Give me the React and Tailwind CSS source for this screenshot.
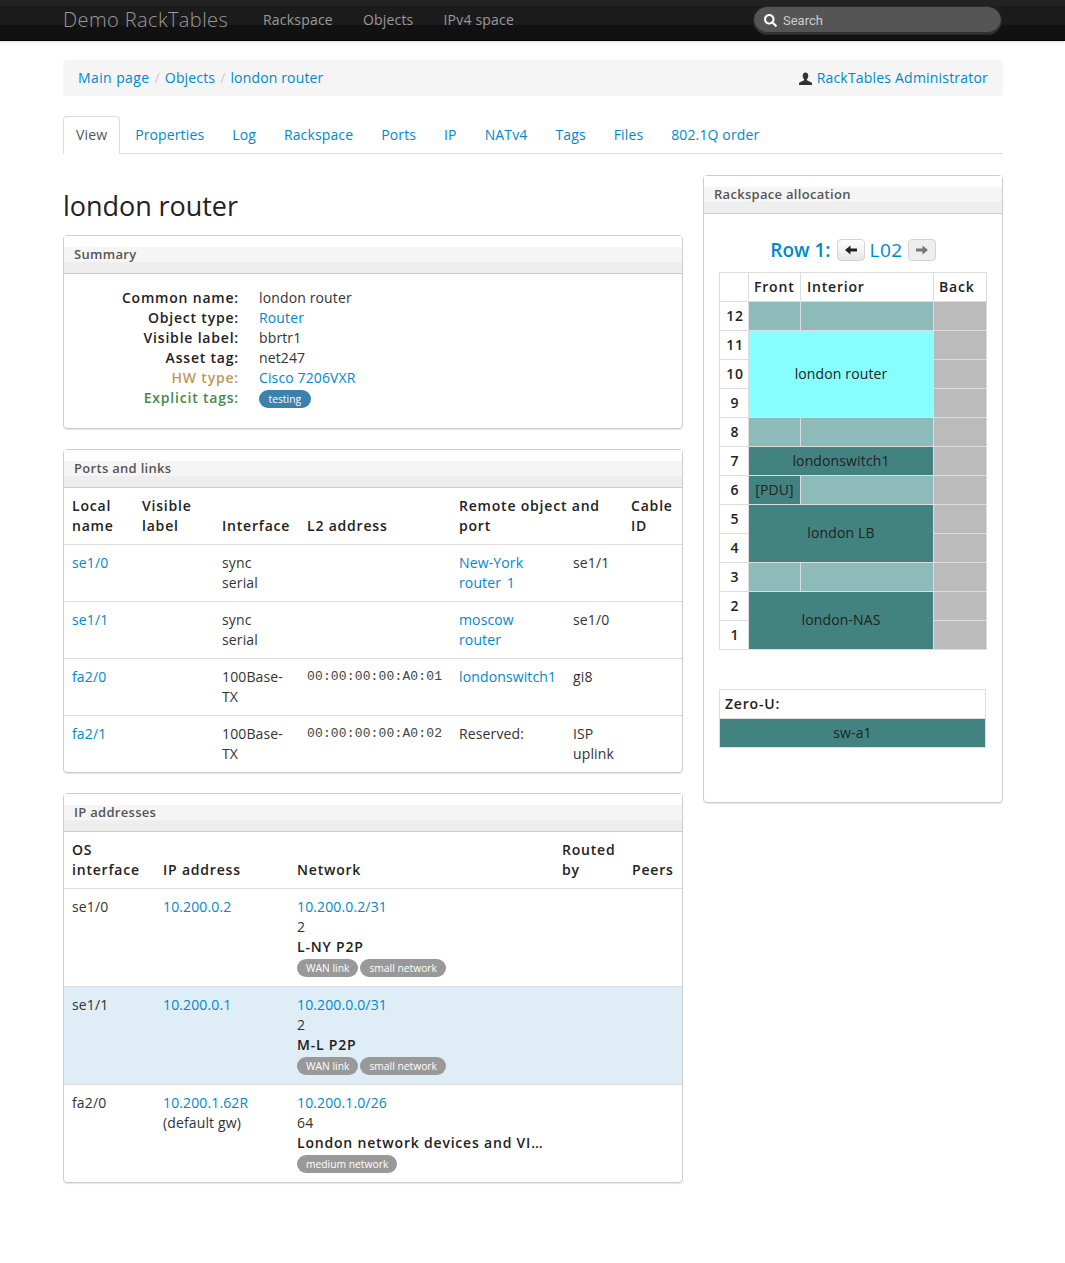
import { FaSearch } from "react-icons/fa";

const LINK = "text-[#0088cc]";
const BOLD = "font-semibold tracking-[0.8px]";

function Label({ children, blue }) {
  return (
    <span className={`inline-block h-[18px] rounded-full text-[10.3px] leading-[18px] tracking-normal text-white font-normal ${blue ? "bg-[#3a81ad] px-[9.5px]" : "bg-[#999999] px-[9px]"}`}>
      {children}
    </span>
  );
}

function Panel({ title, children, className = "" }) {
  return (
    <section className={`rounded border border-[#cccccc] shadow-[0_1px_1px_rgba(0,0,0,0.1)] ${className}`}>
      <h3 className="flex h-[38px] items-center border-b border-[#cccccc] bg-[linear-gradient(#ffffff_11px,#f5f5f5_11px,#f5f5f5_26px,#eeeeee_26px)] px-[10px] pb-[2px] text-[13px] font-semibold tracking-[0.3px] text-[#555555]">
        {title}
      </h3>
      {children}
    </section>
  );
}

const summary = [
  ["Common name:", "london router", "text-[#222222]"],
  ["Object type:", <a className={LINK}>Router</a>, "text-[#222222]"],
  ["Visible label:", "bbrtr1", "text-[#222222]"],
  ["Asset tag:", "net247", "text-[#222222]"],
  ["HW type:", <a className={LINK}>Cisco 7206VXR</a>, "text-[#c09853]"],
  ["Explicit tags:", <Label blue>testing</Label>, "text-[#468847]"],
];

const ports = [
  ["se1/0", "sync serial", "", <a className={LINK}>New-York router 1</a>, "se1/1"],
  ["se1/1", "sync serial", "", <a className={LINK}>moscow router</a>, "se1/0"],
  ["fa2/0", "100Base-TX", "00:00:00:00:A0:01", <a className={LINK}>londonswitch1</a>, "gi8"],
  ["fa2/1", "100Base-TX", "00:00:00:00:A0:02", "Reserved:", "ISP uplink"],
];

const ips = [
  { os: "se1/0", ip: "10.200.0.2", net: "10.200.0.2/31", n: "2", name: "L-NY P2P", tags: ["WAN link", "small network"] },
  { os: "se1/1", ip: "10.200.0.1", net: "10.200.0.0/31", n: "2", name: "M-L P2P", tags: ["WAN link", "small network"], hl: true },
  { os: "fa2/0", ip: "10.200.1.62R", gw: true, net: "10.200.1.0/26", n: "64", name: "London network devices and VI…", tags: ["medium network"] },
];

const th = `border-t border-[#dddddd] p-2 text-left align-bottom text-[#222222] ${BOLD}`;
const td = "border-t border-[#dddddd] p-2 align-top";

function Arrow({ right, dim }) {
  return (
    <span className={`flex h-[22px] w-7 shrink-0 items-center justify-center rounded border border-[#d5d5d5] ${dim ? "bg-[#eeeeee]" : "bg-[linear-gradient(#ffffff,#e6e6e6)]"}`}>
      <svg width="14" height="12" viewBox="0 0 14 12" className={right ? "rotate-180" : ""}>
        <path d="M1 6 L6.5 1.5 L6.5 4.5 L13 4.5 L13 7.5 L6.5 7.5 L6.5 10.5 Z" fill={dim ? "#777777" : "#222222"} />
      </svg>
    </span>
  );
}

const FREE = "bg-[#8cbbb9]";
const USED = "bg-[#428280]";
const rc = "border border-[#dddddd] p-0 text-center";

function Back() {
  return <td className={`${rc} bg-[#bbbbbb]`} />;
}

function Unit({ n }) {
  return <th className={`${rc} pl-[2px] text-[#222222] ${BOLD}`}>{n}</th>;
}

function FreeCells() {
  return (
    <>
      <td className={`${rc} ${FREE}`} />
      <td className={`${rc} ${FREE}`} />
    </>
  );
}

function Rack() {
  return (
    <table className="w-[267px] table-fixed border-collapse text-[#222222] [&_tr]:h-[29px]">
      <colgroup>
        <col className="w-[29px]" />
        <col className="w-[52px]" />
        <col className="w-[133px]" />
        <col className="w-[53px]" />
      </colgroup>
      <tbody>
        <tr>
          <td className={rc} />
          <th className={`border border-[#dddddd] pl-[5px] text-left ${BOLD}`}>Front</th>
          <th className={`border border-[#dddddd] pl-[6px] text-left ${BOLD}`}>Interior</th>
          <th className={`border border-[#dddddd] pl-[5px] text-left ${BOLD}`}>Back</th>
        </tr>
        <tr><Unit n="12" /><FreeCells /><Back /></tr>
        <tr><Unit n="11" /><td rowSpan={3} colSpan={2} className={`${rc} bg-[#88ffff]`}>london router</td><Back /></tr>
        <tr><Unit n="10" /><Back /></tr>
        <tr><Unit n="9" /><Back /></tr>
        <tr><Unit n="8" /><FreeCells /><Back /></tr>
        <tr><Unit n="7" /><td colSpan={2} className={`${rc} ${USED}`}>londonswitch1</td><Back /></tr>
        <tr><Unit n="6" /><td className={`${rc} ${USED}`}>[PDU]</td><td className={`${rc} ${FREE}`} /><Back /></tr>
        <tr><Unit n="5" /><td rowSpan={2} colSpan={2} className={`${rc} ${USED} pb-[2px]`}>london LB</td><Back /></tr>
        <tr><Unit n="4" /><Back /></tr>
        <tr><Unit n="3" /><FreeCells /><Back /></tr>
        <tr><Unit n="2" /><td rowSpan={2} colSpan={2} className={`${rc} ${USED} pb-[2px]`}>london-NAS</td><Back /></tr>
        <tr><Unit n="1" /><Back /></tr>
      </tbody>
    </table>
  );
}

export default function App() {
  return (
    <div className="min-h-[1263px] bg-white font-['Open_Sans',sans-serif] text-[14px] leading-5 tracking-[0.13px] text-[#333333]">
      <header className="h-[41px] bg-[linear-gradient(#222222_6px,#1b1b1b_6px,#1b1b1b_25px,#111111_25px,#111111_40px,#000000_40px)] shadow-[0_1px_3px_rgba(0,0,0,0.15)]">
        <div className="ml-[63px] flex h-10 w-[940px] items-center">
          <span className="w-[200px] text-[20px] font-light tracking-[0.4px] text-[#999999]">Demo RackTables</span>
          <nav className="flex gap-[30px] tracking-[0.2px] text-[#999999]">
            <span>Rackspace</span>
            <span>Objects</span>
            <span>IPv4 space</span>
          </nav>
          <div className="ml-auto mr-px flex h-[29px] w-[249px] items-center gap-[6px] rounded-full border border-[#2a2a2a] bg-[#555555] pl-[10px] font-['Roboto',sans-serif] text-[13px] tracking-normal text-[#cccccc] shadow-[inset_0_-2px_0_#333333]">
            <FaSearch className="h-[13px] w-[13px] text-white" />
            <span className="pt-px">Search</span>
          </div>
        </div>
      </header>

      <main className="ml-[63px] w-[940px]">
        <div className="mt-[19px] flex h-9 items-center justify-between rounded bg-[#f5f5f5] px-[15px] tracking-[0.15px]">
          <div className={LINK}>
            <span className="tracking-[0.4px]">Main page</span><span className="px-[5px] text-[#cccccc]">/</span>Objects<span className="px-[5px] text-[#cccccc]">/</span>london router
          </div>
          <div className="flex items-center gap-[5px]">
            <svg width="13" height="13" viewBox="0 0 13 13" className="shrink-0">
              <path d="M6.5 0.5C8.3 0.5 9.3 1.9 9.3 3.8C9.3 5.4 8.6 6.6 7.9 7.3L7.9 8.2L12 10.2C12.7 10.6 13 11 13 11.6L13 13L0 13L0 11.6C0 11 0.3 10.6 1 10.2L5.1 8.2L5.1 7.3C4.4 6.6 3.7 5.4 3.7 3.8C3.7 1.9 4.7 0.5 6.5 0.5Z" fill="#333333" />
            </svg>
            <span className={`${LINK} tracking-[0.2px]`}>RackTables Administrator</span>
          </div>
        </div>

        <ul className={`mt-5 flex h-[38px] gap-[2px] border-b border-[#dddddd] ${LINK}`}>
          <li className="h-[38px] rounded-t border border-b-0 border-[#dddddd] bg-white px-3 pt-2 text-[#555555]">View</li>
          {["Properties", "Log", "Rackspace", "Ports", "IP", "NATv4", "Tags", "Files", "802.1Q order"].map((t) => (
            <li key={t} className="border border-transparent px-3 pt-2">{t}</li>
          ))}
        </ul>

        <div className="mt-[21px] flex gap-5">
          <div className="w-[620px]">
            <h1 className="mt-[11px] mb-[9px] h-10 text-[27px] leading-10 tracking-[-0.05px] text-[#222222]">london router</h1>

            <Panel title="Summary">
              <div className="pt-[14px] pb-5">
                {summary.map(([k, v, c]) => (
                  <div key={k} className="flex h-5">
                    <div className={`w-[175px] text-right ${BOLD} ${c}`}>{k}</div>
                    <div className="pl-5">{v}</div>
                  </div>
                ))}
              </div>
            </Panel>

            <Panel title="Ports and links" className="mt-5">
              <table className="w-full table-fixed border-collapse [&_tr:first-child_th]:border-t-0">
                <colgroup>
                  <col className="w-[70px]" />
                  <col className="w-[80px]" />
                  <col className="w-[85px]" />
                  <col className="w-[152px]" />
                  <col className="w-[114px]" />
                  <col className="w-[58px]" />
                  <col className="w-[59px]" />
                </colgroup>
                <thead>
                  <tr>
                    <th className={th}>Local name</th>
                    <th className={th}>Visible label</th>
                    <th className={th}>Interface</th>
                    <th className={th}>L2 address</th>
                    <th colSpan={2} className={th}>Remote object and port</th>
                    <th className={th}>Cable ID</th>
                  </tr>
                </thead>
                <tbody>
                  {ports.map(([name, iface, mac, remote, port]) => (
                    <tr key={name}>
                      <td className={`${td} ${LINK}`}>{name}</td>
                      <td className={td} />
                      <td className={`${td} [word-spacing:2px]`}>{iface}</td>
                      <td className={`${td} whitespace-nowrap font-['Liberation_Mono',monospace] text-[13px] tracking-[0.15px] text-[#444444]`}>{mac}</td>
                      <td className={`${td} [word-spacing:2px]`}>{remote}</td>
                      <td className={td}>{port}</td>
                      <td className={td} />
                    </tr>
                  ))}
                </tbody>
              </table>
            </Panel>

            <Panel title="IP addresses" className="mt-5">
              <table className="w-full table-fixed border-collapse [&_tr:first-child_th]:border-t-0">
                <colgroup>
                  <col className="w-[91px]" />
                  <col className="w-[134px]" />
                  <col className="w-[265px]" />
                  <col className="w-[70px]" />
                  <col className="w-[58px]" />
                </colgroup>
                <thead>
                  <tr>
                    <th className={th}>OS interface</th>
                    <th className={th}>IP address</th>
                    <th className={th}>Network</th>
                    <th className={th}>Routed by</th>
                    <th className={th}>Peers</th>
                  </tr>
                </thead>
                <tbody>
                  {ips.map((r) => (
                    <tr key={r.os} className={r.hl ? "bg-[#deedf6]" : ""}>
                      <td className={td}>{r.os}</td>
                      <td className={td}>
                        <div className={LINK}>{r.ip}</div>
                        {r.gw && <div>(default gw)</div>}
                      </td>
                      <td className={td}>
                        <div className={LINK}>{r.net}</div>
                        <div>{r.n}</div>
                        <div className={`whitespace-nowrap text-[#222222] ${BOLD}`}>{r.name}</div>
                        <div className="flex h-[21px] items-center gap-[2px]">
                          {r.tags.map((t) => <Label key={t}>{t}</Label>)}
                        </div>
                      </td>
                      <td className={td} />
                      <td className={td} />
                    </tr>
                  ))}
                </tbody>
              </table>
            </Panel>
          </div>

          <div className="w-[300px]">
            <Panel title="Rackspace allocation" className="h-[628px]">
              <div className="px-[15px] pt-[24px]">
                <div className={`mb-[11px] flex h-[23px] items-center justify-center gap-[5px] text-[19px] tracking-normal ${LINK}`}>
                  <span className="mr-px font-semibold">Row 1:</span>
                  <Arrow />
                  <span className="tracking-[0.5px]">L02</span>
                  <Arrow right dim />
                </div>
                <Rack />
                <table className="mt-[39px] w-[267px] border-collapse text-[#222222]">
                  <tbody>
                    <tr className="h-[29px]"><td className={`border border-[#dddddd] pl-[5px] ${BOLD}`}>Zero-U:</td></tr>
                    <tr className="h-[29px]"><td className={`${rc} ${USED}`}>sw-a1</td></tr>
                  </tbody>
                </table>
              </div>
            </Panel>
          </div>
        </div>
      </main>
    </div>
  );
}
